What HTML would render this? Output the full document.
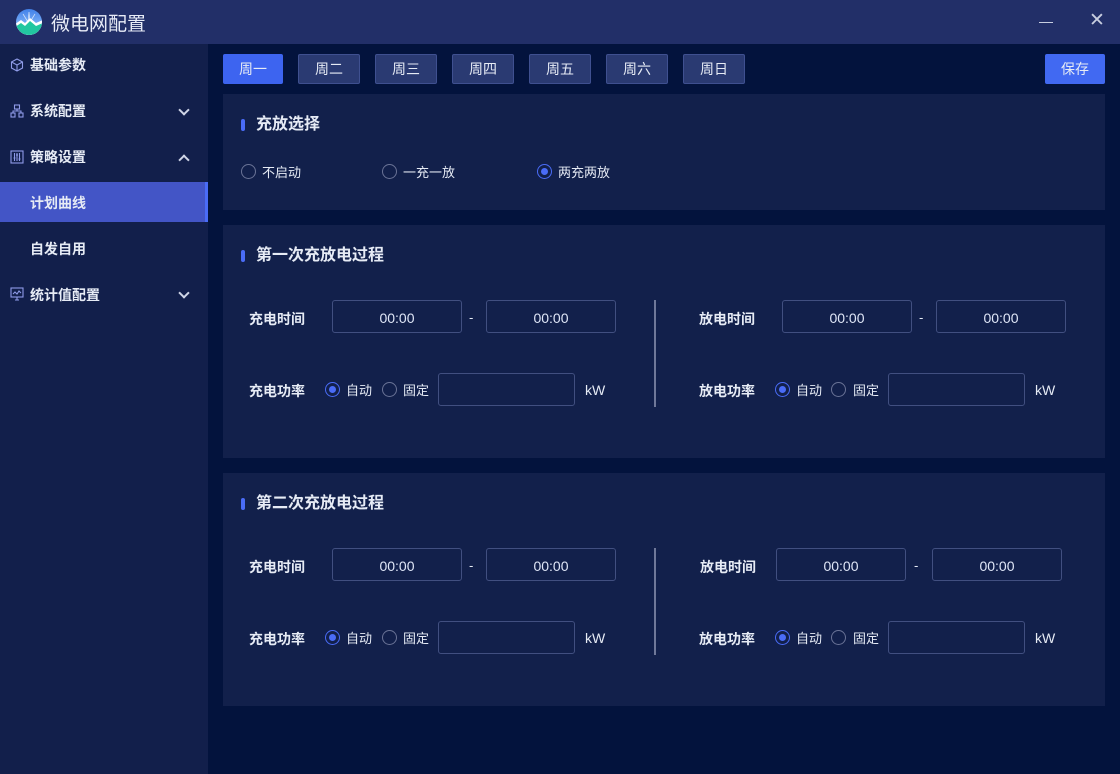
<!DOCTYPE html>
<html><head><meta charset="utf-8"><style>
*{margin:0;padding:0;box-sizing:border-box}
body{width:1120px;height:774px;overflow:hidden;background:#03133d;font-family:"Liberation Sans","Noto Sans CJK SC",sans-serif;color:#e6ebf5;position:relative}
.a{position:absolute}
.title{left:0;top:0;width:1120px;height:44px;background:#222f68}
.side{left:0;top:44px;width:208px;height:730px;background:#121f4b}
.mi{position:absolute;left:0;width:208px;height:40px;font-size:14px;font-weight:bold;line-height:40px}
.mi .ic{position:absolute;left:10px;top:13px;width:14px;height:14px}
.mi span{position:absolute;left:30px}
.chev{position:absolute;left:180px;top:15px;width:8px;height:8px;border-right:2px solid #cfd5e6;border-bottom:2px solid #cfd5e6;transform:rotate(45deg)}
.chev.up{transform:rotate(-135deg);top:19px}
.tab{position:absolute;top:54px;height:30px;width:62px;background:#2a3a72;border:1px solid #3f5090;border-radius:2px;font-size:14px;text-align:center;line-height:28px}
.card{position:absolute;left:223px;width:882px;background:#12204b}
.h{position:absolute;left:18px;font-size:16px;font-weight:bold;line-height:20px}
.h:before{content:"";position:absolute;left:0;top:4px;width:4px;height:12px;border-radius:2px;background:#4a6cf7}
.h span{margin-left:15px}
.lb{position:absolute;font-size:14px;font-weight:bold;line-height:20px}
.inp{position:absolute;height:33px;border:1px solid #414f80;border-radius:3px;font-size:14px;text-align:center;line-height:34px;color:#dfe6f7}
.rd{position:absolute;width:15px;height:15px;border:1.5px solid #6a7396;border-radius:50%}
.rd.on{border-color:#4a6cf7}
.rd.on:after{content:"";position:absolute;left:2.5px;top:2.5px;width:7px;height:7px;border-radius:50%;background:#4a6cf7}
.t{position:absolute;font-size:13px;line-height:18px}
.dv{position:absolute;width:2px;background:#6f7899}
</style></head><body>
<div class="a title">
<svg class="a" style="left:15px;top:8px" width="28" height="28" viewBox="0 0 28 28"><defs><clipPath id="c"><circle cx="14" cy="14" r="13"/></clipPath><linearGradient id="g" x1="0" y1="0" x2="0" y2="1"><stop offset="0" stop-color="#3d7de8"/><stop offset="1" stop-color="#a8d4ff"/></linearGradient></defs><g clip-path="url(#c)"><rect width="28" height="28" fill="url(#g)"/><path d="M14 4L13 14M14 4l1 10M8 6l5 8M20 6l-5 8" stroke="#fff" stroke-width="0.8" opacity=".7"/><path d="M0 16L6 12L10 15L15 10L21 15L28 12V28H0Z" fill="#fff"/><path d="M0 19L6 15L10 18L15 13L21 18L28 15V28H0Z" fill="#22c7a0"/></g></svg>
<div class="a" style="left:51px;top:9px;font-size:19px;color:#e8ecf7">微电网配置</div>
<div class="a" style="left:1039px;top:22px;width:14px;height:1px;background:#c8cee0"></div>
<div class="a" style="left:1089px;top:9px;font-size:19px;color:#c8cee0;font-weight:300">✕</div>
</div>
<div class="a side">
<div class="mi" style="top:1px"><svg class="ic" viewBox="0 0 14 14" fill="none" stroke="#8f9be8" stroke-width="1.1"><path d="M7 1l5.5 3v6L7 13 1.5 10V4z M1.5 4L7 7l5.5-3M7 7v6"/></svg><span>基础参数</span></div>
<div class="mi" style="top:47px"><svg class="ic" viewBox="0 0 14 14" fill="none" stroke="#8f9be8" stroke-width="1.1"><rect x="4.5" y="1" width="5" height="4"/><rect x="1" y="9" width="4" height="4"/><rect x="9" y="9" width="4" height="4"/><path d="M7 5v2M3 9V7h8v2"/></svg><span>系统配置</span><i class="chev"></i></div>
<div class="mi" style="top:93px"><svg class="ic" viewBox="0 0 14 14" fill="none" stroke="#8f9be8" stroke-width="1.1"><rect x="1" y="1" width="12" height="12"/><path d="M4.5 3v8M7 3v8M9.5 3v8M3.5 8h2M6 5h2M8.5 9h2"/></svg><span>策略设置</span><i class="chev up"></i></div>
<div class="mi" style="top:138px;background:#4355c6;font-weight:bold;line-height:42px"><span>计划曲线</span><div class="a" style="right:0;top:0;width:3px;height:40px;background:#4a6cf7"></div></div>
<div class="mi" style="top:184px;line-height:42px"><span>自发自用</span></div>
<div class="mi" style="top:230px;line-height:42px"><svg class="ic" viewBox="0 0 14 14" fill="none" stroke="#8f9be8" stroke-width="1.1"><rect x="1" y="1" width="12" height="9"/><path d="M3 7l2-2 2 2 2-3 2 2M5 13h4M7 10v3"/></svg><span>统计值配置</span><i class="chev"></i></div>
</div>
<div class="tab" style="left:223px;width:60px;background:#3d64f0;border-color:#3d64f0">周一</div>
<div class="tab" style="left:298px">周二</div>
<div class="tab" style="left:375px">周三</div>
<div class="tab" style="left:452px">周四</div>
<div class="tab" style="left:529px">周五</div>
<div class="tab" style="left:606px">周六</div>
<div class="tab" style="left:683px">周日</div>
<div class="tab" style="left:1045px;width:60px;background:#4169f2;border-color:#4169f2">保存</div>

<div class="card" style="top:94px;height:116px">
<div class="h" style="top:21px"><span>充放选择</span></div>
<div class="rd" style="left:18px;top:70px"></div><div class="t" style="left:39px;top:70px">不启动</div>
<div class="rd" style="left:159px;top:70px"></div><div class="t" style="left:180px;top:70px">一充一放</div>
<div class="rd on" style="left:314px;top:70px"></div><div class="t" style="left:335px;top:70px">两充两放</div>
</div>

<div class="card" style="top:225px;height:233px">
<div class="h" style="top:21px"><span>第一次充放电过程</span></div>
<div class="lb" style="left:26px;top:84px">充电时间</div>
<div class="inp" style="left:109px;top:75px;width:130px">00:00</div>
<div class="t" style="left:246px;top:84px">-</div>
<div class="inp" style="left:263px;top:75px;width:130px">00:00</div>
<div class="dv" style="left:431px;top:75px;height:107px"></div>
<div class="lb" style="left:476px;top:84px">放电时间</div>
<div class="inp" style="left:559px;top:75px;width:130px">00:00</div>
<div class="t" style="left:696px;top:84px">-</div>
<div class="inp" style="left:713px;top:75px;width:130px">00:00</div>
<div class="lb" style="left:26px;top:156px">充电功率</div>
<div class="rd on" style="left:102px;top:157px"></div><div class="t" style="left:123px;top:157px">自动</div>
<div class="rd" style="left:159px;top:157px"></div><div class="t" style="left:180px;top:157px">固定</div>
<div class="inp" style="left:215px;top:148px;width:137px"></div>
<div class="t" style="left:362px;top:156px;font-size:14px">kW</div>
<div class="lb" style="left:476px;top:156px">放电功率</div>
<div class="rd on" style="left:552px;top:157px"></div><div class="t" style="left:573px;top:157px">自动</div>
<div class="rd" style="left:608px;top:157px"></div><div class="t" style="left:630px;top:157px">固定</div>
<div class="inp" style="left:665px;top:148px;width:137px"></div>
<div class="t" style="left:812px;top:156px;font-size:14px">kW</div>
</div>

<div class="card" style="top:473px;height:233px">
<div class="h" style="top:21px"><span>第二次充放电过程</span></div>
<div class="lb" style="left:26px;top:84px">充电时间</div>
<div class="inp" style="left:109px;top:75px;width:130px">00:00</div>
<div class="t" style="left:246px;top:84px">-</div>
<div class="inp" style="left:263px;top:75px;width:130px">00:00</div>
<div class="dv" style="left:431px;top:75px;height:107px"></div>
<div class="lb" style="left:477px;top:84px">放电时间</div>
<div class="inp" style="left:553px;top:75px;width:130px">00:00</div>
<div class="t" style="left:691px;top:84px">-</div>
<div class="inp" style="left:709px;top:75px;width:130px">00:00</div>
<div class="lb" style="left:26px;top:156px">充电功率</div>
<div class="rd on" style="left:102px;top:157px"></div><div class="t" style="left:123px;top:157px">自动</div>
<div class="rd" style="left:159px;top:157px"></div><div class="t" style="left:180px;top:157px">固定</div>
<div class="inp" style="left:215px;top:148px;width:137px"></div>
<div class="t" style="left:362px;top:156px;font-size:14px">kW</div>
<div class="lb" style="left:476px;top:156px">放电功率</div>
<div class="rd on" style="left:552px;top:157px"></div><div class="t" style="left:573px;top:157px">自动</div>
<div class="rd" style="left:608px;top:157px"></div><div class="t" style="left:630px;top:157px">固定</div>
<div class="inp" style="left:665px;top:148px;width:137px"></div>
<div class="t" style="left:812px;top:156px;font-size:14px">kW</div>
</div>
</body></html>
